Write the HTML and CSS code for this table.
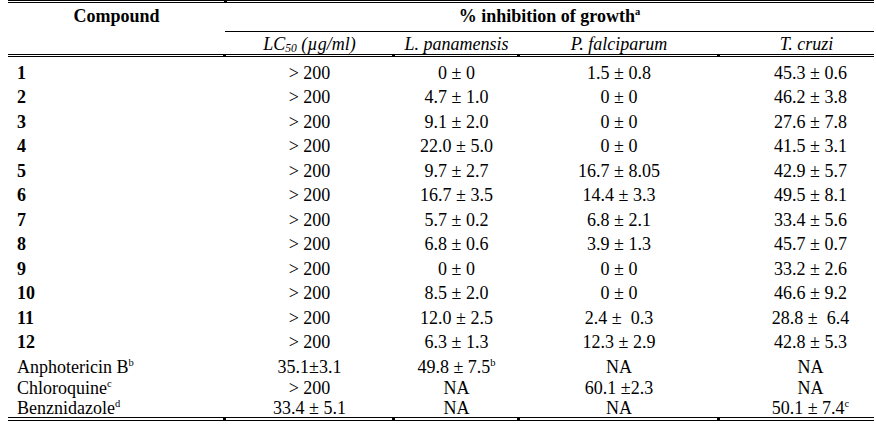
FILE: index.html
```html
<!DOCTYPE html>
<html lang="en">
<head>
<meta charset="utf-8">
<title>Inhibition of growth</title>
<link rel="stylesheet" href="styles.css">
</head>
<body>
<table class="tbl">
  <colgroup>
    <col class="c1"><col class="c2"><col class="c3"><col class="c4"><col class="c5">
  </colgroup>
  <thead>
    <tr class="h1">
      <th class="cmp"><span class="b">Compound</span></th>
      <th class="grp tick-top" colspan="4"><span class="b">% inhibition of growth</span><sup class="b">a</sup></th>
    </tr>
    <tr class="h2">
      <th></th>
      <th class="sub tick"><i>LC<sub>50</sub> (µg/ml)</i></th>
      <th class="sub tick"><i>L. panamensis</i></th>
      <th class="sub tick"><i>P. falciparum</i></th>
      <th class="sub tick last"><i>T. cruzi</i></th>
    </tr>
  </thead>
  <tbody>
    <tr class="first"><td class="num">1</td><td>&gt; 200</td><td>0 ± 0</td><td>1.5 ± 0.8</td><td class="last">45.3 ± 0.6</td></tr>
    <tr><td class="num">2</td><td>&gt; 200</td><td>4.7 ± 1.0</td><td>0 ± 0</td><td class="last">46.2 ± 3.8</td></tr>
    <tr><td class="num">3</td><td>&gt; 200</td><td>9.1 ± 2.0</td><td>0 ± 0</td><td class="last">27.6 ± 7.8</td></tr>
    <tr><td class="num">4</td><td>&gt; 200</td><td>22.0 ± 5.0</td><td>0 ± 0</td><td class="last">41.5 ± 3.1</td></tr>
    <tr><td class="num">5</td><td>&gt; 200</td><td>9.7 ± 2.7</td><td>16.7 ± 8.05</td><td class="last">42.9 ± 5.7</td></tr>
    <tr><td class="num">6</td><td>&gt; 200</td><td>16.7 ± 3.5</td><td>14.4 ± 3.3</td><td class="last">49.5 ± 8.1</td></tr>
    <tr><td class="num">7</td><td>&gt; 200</td><td>5.7 ± 0.2</td><td>6.8 ± 2.1</td><td class="last">33.4 ± 5.6</td></tr>
    <tr><td class="num">8</td><td>&gt; 200</td><td>6.8 ± 0.6</td><td>3.9 ± 1.3</td><td class="last">45.7 ± 0.7</td></tr>
    <tr><td class="num">9</td><td>&gt; 200</td><td>0 ± 0</td><td>0 ± 0</td><td class="last">33.2 ± 2.6</td></tr>
    <tr><td class="num">10</td><td>&gt; 200</td><td>8.5 ± 2.0</td><td>0 ± 0</td><td class="last">46.6 ± 9.2</td></tr>
    <tr><td class="num">11</td><td>&gt; 200</td><td>12.0 ± 2.5</td><td>2.4 ±&nbsp; 0.3</td><td class="last">28.8 ±&nbsp; 6.4</td></tr>
    <tr class="twelve"><td class="num">12</td><td>&gt; 200</td><td>6.3 ± 1.3</td><td>12.3 ± 2.9</td><td class="last">42.8 ± 5.3</td></tr>
    <tr class="ref r13"><td class="name">Anphotericin B<sup>b</sup></td><td>35.1±3.1</td><td>49.8 ± 7.5<sup>b</sup></td><td>NA</td><td class="last">NA</td></tr>
    <tr class="ref"><td class="name">Chloroquine<sup>c</sup></td><td>&gt; 200</td><td>NA</td><td>60.1 ±2.3</td><td class="last">NA</td></tr>
    <tr class="ref end"><td class="name">Benznidazole<sup>d</sup></td><td class="tick">33.4 ± 5.1</td><td class="tick">NA</td><td class="tick">NA</td><td class="tick last">50.1 ± 7.4<sup>c</sup></td></tr>
  </tbody>
</table>
</body>
</html>
```
FILE: styles.css
```css
html, body {
  margin: 0;
  background: #fff;
}
body {
  padding: 0 0 0 8px;
  font-family: "Liberation Serif", "Times New Roman", serif;
  font-size: 18px;
  color: #000;
}
.tbl {
  width: 866px;
  border-collapse: separate;
  border-spacing: 0;
  table-layout: fixed;
}
.c1 { width: 217px; }
.c2 { width: 169px; }
.c3 { width: 125px; }
.c4 { width: 200px; }
.c5 { width: 155px; }

th, td {
  padding: 0;
  text-align: center;
  vertical-align: top;
  white-space: nowrap;
  font-weight: normal;
  box-sizing: border-box;
}
.b, td.num {
  font-weight: bold;
}
.h1 th {
  border-top: 3px double #000;
  height: 32px;
  line-height: 20px;
  padding-top: 3px;
}
.grp {
  border-bottom: 1px solid #000;
  position: relative;
}
.h2 th {
  border-bottom: 3px double #000;
  height: 25px;
  line-height: 20px;
  padding-top: 2px;
}
.sub { position: relative; }
.sub sub {
  font-size: 11.5px;
  line-height: 0;
  vertical-align: -2px;
}
td.last {
  padding-left: 28px;
}
.h2 th.last { padding-left: 20px; }

td {
  line-height: 20.5px;
  padding-top: 2px;
  padding-bottom: 2px;
}
tr.first td { padding-top: 5.75px; }
td.num {
  text-align: left;
  padding-left: 9px;
}
td.name {
  text-align: left;
  padding-left: 9px;
}
tr.ref td {
  line-height: 21px;
  padding-top: 0;
  padding-bottom: 0;
}
tr.r13 td { padding-top: 2px; }
tr.end td {
  line-height: 18.5px;
  border-bottom: 4px double #000;
  position: relative;
}
sup {
  font-size: 10.5px;
  line-height: 0;
  vertical-align: 7px;
}
.tick::after {
  content: "";
  position: absolute;
  left: -2px;
  bottom: -3px;
  width: 3px;
  height: 3px;
  background: #000;
}
tr.end .tick::after {
  bottom: -4px;
  height: 4px;
}
.tick-top::before {
  content: "";
  position: absolute;
  left: -1px;
  top: -3px;
  width: 3px;
  height: 3px;
  background: #000;
}
```
